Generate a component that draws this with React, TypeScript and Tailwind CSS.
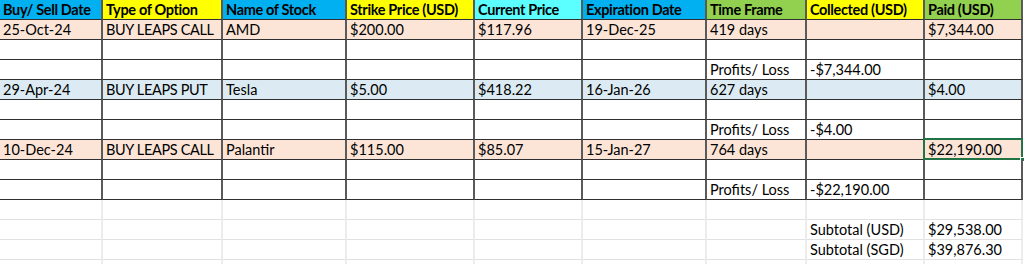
import { FC } from "react";

const cols = "grid-cols-[103px_120px_124px_128px_108px_124px_100px_118px_98px_1px]";

const headers: { label: string; bg: string }[] = [
  { label: "Buy/ Sell Date", bg: "bg-[#00b0f0]" },
  { label: "Type of Option", bg: "bg-[#ffff00]" },
  { label: "Name of Stock", bg: "bg-[#00b0f0]" },
  { label: "Strike Price (USD)", bg: "bg-[#ffff00]" },
  { label: "Current Price", bg: "bg-[#5cffff]" },
  { label: "Expiration Date", bg: "bg-[#00b0f0]" },
  { label: "Time Frame", bg: "bg-[#92d050]" },
  { label: "Collected (USD)", bg: "bg-[#ffff00]" },
  { label: "Paid (USD)", bg: "bg-[#92d050]" },
];

type Trade = {
  date: string;
  type: string;
  stock: string;
  strike: string;
  current: string;
  expiry: string;
  days: string;
  paid: string;
  pl: string;
  bg: string;
};

const trades: Trade[] = [
  { date: "25-Oct-24", type: "BUY LEAPS CALL", stock: "AMD", strike: "$200.00", current: "$117.96", expiry: "19-Dec-25", days: "419 days", paid: "$7,344.00", pl: "-$7,344.00", bg: "bg-[#fce4d6]" },
  { date: "29-Apr-24", type: "BUY LEAPS PUT", stock: "Tesla", strike: "$5.00", current: "$418.22", expiry: "16-Jan-26", days: "627 days", paid: "$4.00", pl: "-$4.00", bg: "bg-[#dcebf3]" },
  { date: "10-Dec-24", type: "BUY LEAPS CALL", stock: "Palantir", strike: "$115.00", current: "$85.07", expiry: "15-Jan-27", days: "764 days", paid: "$22,190.00", pl: "-$22,190.00", bg: "bg-[#fce4d6]" },
];

// one bordered cell of the table body
const Cell: FC<{ text?: string; bg?: string; bold?: boolean; tight?: boolean; selected?: boolean }> = ({ text, bg = "", bold, tight, selected }) => (
  <div className={`relative h-[20px] border-b border-b-[#303030] border-r-2 border-r-[#5a5a5a] pl-[3px] leading-[20px] whitespace-nowrap ${bg} ${bold ? "font-bold" : ""} ${tight ? "tracking-[-0.35px]" : ""}`}>
    {text}
    {selected && (
      <>
        <div className="pointer-events-none absolute -left-[2px] -top-[2px] w-[100px] h-[22px] border-2 border-[#217346]" />
        <div className="pointer-events-none absolute -right-[4px] bottom-[-3px] w-[5px] h-[5px] bg-[#217346] border border-white" />
      </>
    )}
  </div>
);

// plain worksheet cell with light gridlines
const Grid: FC<{ text?: string }> = ({ text }) => (
  <div className="h-[20px] border-b border-b-[#e1e1e1] border-r-2 border-r-[#ececec] pl-[3px] leading-[20px] whitespace-nowrap">{text}</div>
);

export default function App() {
  const empty = Array.from({ length: 9 }, () => "");
  return (
    <div className="w-[1024px] h-[264px] overflow-hidden bg-white text-black text-[14.5px] font-['Lato','Liberation_Sans',sans-serif]">
      <div className={`grid ${cols}`}>
        {headers.map((h) => (
          <Cell key={h.label} text={h.label} bg={h.bg} bold tight />
        ))}
        <div />
        {trades.map((t, i) => (
          <div key={t.date} className="contents">
            {[t.date, t.type, t.stock, t.strike, t.current, t.expiry, t.days, "", t.paid].map((v, j) => (
              <Cell key={j} text={v} bg={t.bg} tight={j === 1} selected={i === 2 && j === 8} />
            ))}
            <div />
            {empty.map((_, j) => (
              <Cell key={j} />
            ))}
            <div />
            {["", "", "", "", "", "", "Profits/ Loss", t.pl, ""].map((v, j) => (
              <Cell key={j} text={v} />
            ))}
            <div />
          </div>
        ))}
        {[
          empty,
          ["", "", "", "", "", "", "", "Subtotal (USD)", "$29,538.00"],
          ["", "", "", "", "", "", "", "Subtotal (SGD)", "$39,876.30"],
          empty,
        ].map((row, i) => (
          <div key={i} className="contents">
            {row.map((v, j) => (
              <Grid key={j} text={v} />
            ))}
            <div />
          </div>
        ))}
      </div>
    </div>
  );
}
